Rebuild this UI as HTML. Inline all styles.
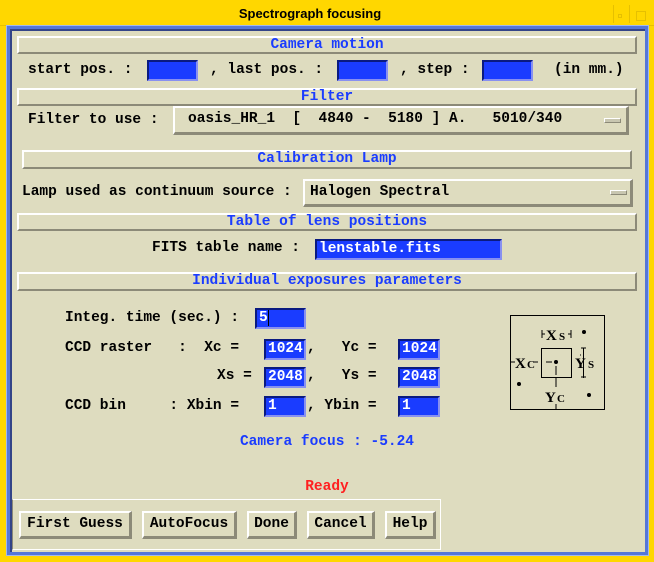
<!DOCTYPE html><html><head><style>
body{margin:0;width:654px;height:562px;background:#ffd700;position:relative;overflow:hidden;font-family:"Liberation Mono",monospace;font-weight:bold;font-size:14.5px}
div{position:absolute;box-sizing:border-box}
.t{white-space:pre;line-height:18px;color:#000}
.h{background:#dedcbf;border-top:2px solid #fff;border-left:2px solid #fff;border-bottom:2px solid #8c8a78;border-right:2px solid #8c8a78;color:#1a3cff;text-align:center;line-height:14px;font-size:14.5px}
.i{background:#1a3cff;border-top:2px solid #0a1a80;border-left:2px solid #0a1a80;border-bottom:2px solid #8890f0;border-right:2px solid #8890f0;color:#fff;line-height:16px;padding-left:2px;white-space:pre}
.b{background:#dedcbf;border-top:2px solid #fff;border-left:2px solid #fff;border-bottom:3px solid #8c8a78;border-right:3px solid #8c8a78;text-align:center;line-height:22px;white-space:pre}
.m{width:17px;height:5px;background:#c8c6b0;border-top:1px solid #fff;border-left:1px solid #fff;border-bottom:1px solid #8c8a78;border-right:1px solid #8c8a78}
</style></head><body>
<div style="left:0;top:0;width:654px;height:26px;background:#ffd700;border-bottom:1px solid #e6c000"></div>
<div class="t" style="left:0;top:6px;width:620px;text-align:center;font-family:'Liberation Sans',sans-serif;font-size:13px;font-weight:bold;line-height:16px">Spectrograph focusing</div>
<div style="left:613px;top:5px;width:17px;height:18px;border-left:1px solid #e6c000;border-right:1px solid #e6c000"></div>
<div style="left:618px;top:14px;width:4px;height:4px;border:1px solid #e6c000"></div>
<div style="left:636px;top:11px;width:10px;height:10px;border:1px solid #e6c000"></div>
<div style="left:6px;top:25px;width:643px;height:531px;background:#5577d8;border:1px solid #a0b8f0"></div>
<div style="left:10px;top:29px;width:635px;height:523px;background:#dedcbf;border-top:2px solid #334488;border-left:2px solid #334488"></div>

<div class="h" style="left:17px;top:36px;width:620px;height:18px">Camera motion</div>
<div class="t" style="left:28px;top:61px">start pos. :</div>
<div class="i" style="left:147px;top:60px;width:51px;height:21px"></div>
<div class="t" style="left:210px;top:61px">, last pos. :</div>
<div class="i" style="left:337px;top:60px;width:51px;height:21px"></div>
<div class="t" style="left:400px;top:61px">, step :</div>
<div class="i" style="left:482px;top:60px;width:51px;height:21px"></div>
<div class="t" style="left:554px;top:61px">(in mm.)</div>

<div class="h" style="left:17px;top:88px;width:620px;height:18px">Filter</div>
<div class="t" style="left:28px;top:111px">Filter to use :</div>
<div class="b" style="left:173px;top:106px;width:456px;height:29px;text-align:left;padding-left:13px">oasis_HR_1  [  4840 -  5180 ] A.   5010/340</div>
<div class="m" style="left:604px;top:118px"></div>

<div class="h" style="left:22px;top:150px;width:610px;height:19px">Calibration Lamp</div>
<div class="t" style="left:22px;top:183px">Lamp used as continuum source :</div>
<div class="b" style="left:303px;top:179px;width:330px;height:28px;text-align:left;padding-left:5px">Halogen Spectral</div>
<div class="m" style="left:610px;top:190px"></div>

<div class="h" style="left:17px;top:213px;width:620px;height:18px">Table of lens positions</div>
<div class="t" style="left:152px;top:239px">FITS table name :</div>
<div class="i" style="left:315px;top:239px;width:187px;height:21px">lenstable.fits</div>

<div class="h" style="left:17px;top:272px;width:620px;height:19px">Individual exposures parameters</div>
<div class="t" style="left:65px;top:309px">Integ. time (sec.) :</div>
<div class="i" style="left:255px;top:308px;width:51px;height:21px;color:#fff">5<span style="border-left:1px solid #000"></span></div>
<div class="t" style="left:65px;top:339px">CCD raster   :  Xc =</div>
<div class="i" style="left:264px;top:339px;width:42px;height:21px">1024</div>
<div class="t" style="left:307px;top:339px">,   Yc =</div>
<div class="i" style="left:398px;top:339px;width:42px;height:21px">1024</div>
<div class="t" style="left:217px;top:367px">Xs =</div>
<div class="i" style="left:264px;top:367px;width:42px;height:21px">2048</div>
<div class="t" style="left:307px;top:367px">,   Ys =</div>
<div class="i" style="left:398px;top:367px;width:42px;height:21px">2048</div>
<div class="t" style="left:65px;top:397px">CCD bin     : Xbin =</div>
<div class="i" style="left:264px;top:396px;width:42px;height:21px">1</div>
<div class="t" style="left:307px;top:397px">, Ybin =</div>
<div class="i" style="left:398px;top:396px;width:42px;height:21px">1</div>

<svg style="position:absolute;left:490px;top:300px" width="140" height="120" font-family="Liberation Serif,serif">
<rect x="20.5" y="15.5" width="94" height="94" fill="none" stroke="#000"/>
<rect x="51.5" y="48.5" width="30" height="29" fill="none" stroke="#000"/>
<circle cx="66" cy="62" r="2" fill="#000"/><circle cx="94" cy="32" r="2" fill="#000"/><circle cx="29" cy="84" r="2" fill="#000"/><circle cx="99" cy="95" r="2" fill="#000"/>
<path d="M52 30v8M52 34h3M81 30v8M78 34h3M91 48h5M93.5 48v30M91 77h5M21 62h4M44 62h4M56 62h6M66 66v9M66 78v9M66 104v6M90 55h1" stroke="#000" fill="none"/>
<text x="56" y="40" font-size="15">X</text><text x="69" y="40" font-size="11">S</text>
<text x="25" y="68" font-size="15">X</text><text x="37" y="68" font-size="11">C</text>
<text x="85" y="68" font-size="15">Y</text><text x="98" y="68" font-size="11">S</text>
<text x="55" y="102" font-size="15">Y</text><text x="67" y="102" font-size="11">C</text>
</svg>

<div class="t" style="left:0;top:433px;width:654px;text-align:center;color:#1a3cff">Camera focus : -5.24</div>
<div class="t" style="left:0;top:478px;width:654px;text-align:center;color:#ff2020">Ready</div>

<div style="left:12px;top:499px;width:429px;height:51px;border-top:1px solid #fff;border-left:1px solid #8c8a78;border-right:1px solid #fff;border-bottom:1px solid #fff"></div>
<div class="b" style="left:19px;top:511px;width:113px;height:28px">First Guess</div>
<div class="b" style="left:142px;top:511px;width:95px;height:28px">AutoFocus</div>
<div class="b" style="left:247px;top:511px;width:50px;height:28px">Done</div>
<div class="b" style="left:307px;top:511px;width:68px;height:28px">Cancel</div>
<div class="b" style="left:385px;top:511px;width:51px;height:28px">Help</div>
</body></html>
